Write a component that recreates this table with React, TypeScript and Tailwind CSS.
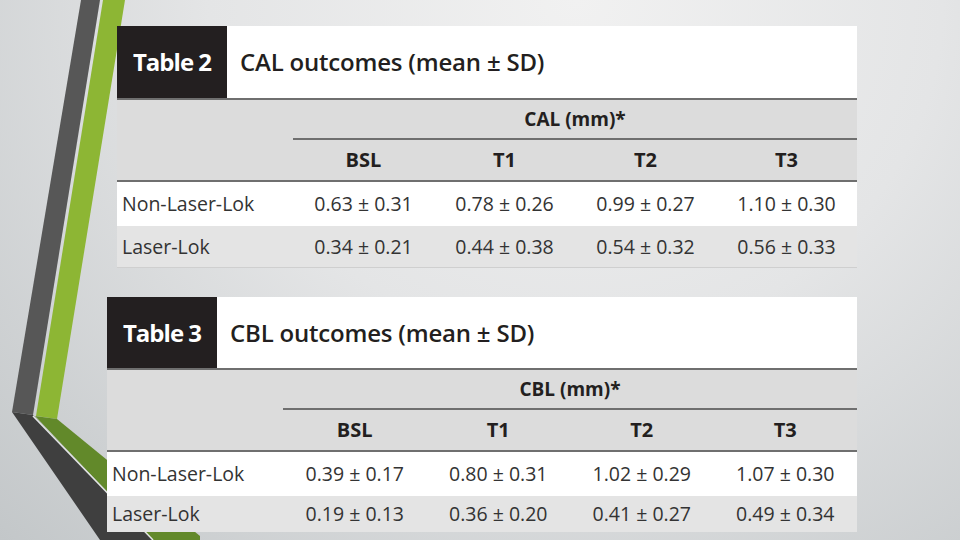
import React from "react";

type Row = { label: string; values: string[] };

const tables = [
  {
    num: "Table 2",
    title: "CAL outcomes (mean ± SD)",
    unit: "CAL (mm)*",
    rows: [
      { label: "Non-Laser-Lok", values: ["0.63 ± 0.31", "0.78 ± 0.26", "0.99 ± 0.27", "1.10 ± 0.30"] },
      { label: "Laser-Lok", values: ["0.34 ± 0.21", "0.44 ± 0.38", "0.54 ± 0.32", "0.56 ± 0.33"] },
    ] as Row[],
  },
  {
    num: "Table 3",
    title: "CBL outcomes (mean ± SD)",
    unit: "CBL (mm)*",
    rows: [
      { label: "Non-Laser-Lok", values: ["0.39 ± 0.17", "0.80 ± 0.31", "1.02 ± 0.29", "1.07 ± 0.30"] },
      { label: "Laser-Lok", values: ["0.19 ± 0.13", "0.36 ± 0.20", "0.41 ± 0.27", "0.49 ± 0.34"] },
    ] as Row[],
  },
];

const cols = ["BSL", "T1", "T2", "T3"];

function Decor() {
  return (
    <svg className="absolute inset-0" width="960" height="540" viewBox="0 0 960 540">
      <polygon points="81,0 100,0 33,415 12,412" fill="#575757" />
      <polygon points="103,0 125,0 57,419 36,416" fill="#8db634" />
      <polygon points="35,416 57,419 200,536 200,540 153,540" fill="#62892a" />
      <polygon points="12,412 33,415 153,540 100,540" fill="#3f3f3f" />
      <line x1="33" y1="416" x2="153" y2="540" stroke="#e4e6e6" strokeWidth="1.5" />
    </svg>
  );
}

function DataTable({
  num,
  title,
  unit,
  rows,
  first,
  lastRowH,
  titleH,
}: {
  num: string;
  title: string;
  unit: string;
  rows: Row[];
  first: number;
  lastRowH: number;
  titleH: number;
}) {
  return (
    <div className="flex w-full flex-col text-[#231f20]">
      <div className="flex bg-white" style={{ height: titleH }}>
        <div className="flex w-[110px] items-center justify-center bg-[#231f20] text-[24px] font-bold tracking-[-1px] text-white">
          {num}
        </div>
        <div className="flex items-center pl-[13px] text-[24px] font-semibold tracking-[-0.2px]">{title}</div>
      </div>
      <div className="flex h-[42px] border-t-2 border-[#6f6f6f] bg-[#dcdcdc]">
        <div className="shrink-0" style={{ width: first }} />
        <div className="flex flex-1 items-center justify-center border-b-2 border-[#6f6f6f] text-[19px] font-bold">
          {unit}
        </div>
      </div>
      <div className="flex h-[42px] border-b-2 border-[#6f6f6f] bg-[#dcdcdc]">
        <div className="shrink-0" style={{ width: first }} />
        {cols.map((c) => (
          <div key={c} className="flex flex-1 items-center justify-center text-[20px] font-bold">
            {c}
          </div>
        ))}
      </div>
      {rows.map((r, i) => (
        <div
          key={r.label}
          className={`flex text-[19.5px] text-[#333333] ${i === 0 ? "bg-white" : "bg-[#e4e4e4]"}`}
          style={{ height: i === 0 ? 44 : lastRowH }}
        >
          <div className="flex shrink-0 items-center pl-[5px]" style={{ width: first }}>
            {r.label}
          </div>
          {r.values.map((v, j) => (
            <div key={j} className="flex flex-1 items-center justify-center">
              {v}
            </div>
          ))}
        </div>
      ))}
    </div>
  );
}

export default function App() {
  return (
    <div
      className="relative h-[540px] w-[960px] overflow-hidden bg-[radial-gradient(ellipse_at_60%_0%,#f1f1f1_0%,#e4e5e6_45%,#c3c7c9_100%)]"
      style={{ fontFamily: '"Open Sans", "Liberation Sans", sans-serif' }}
    >
      <Decor />
      <div className="relative flex flex-col pt-[26px]">
        <div className="ml-[117px] w-[740px] border-b border-[#cfcfcf]">
          <DataTable {...tables[0]} first={176} lastRowH={41} titleH={72} />
        </div>
        <div className="ml-[107px] mt-[29px] w-[750px]">
          <DataTable {...tables[1]} first={176} lastRowH={36} titleH={71} />
        </div>
      </div>
    </div>
  );
}
